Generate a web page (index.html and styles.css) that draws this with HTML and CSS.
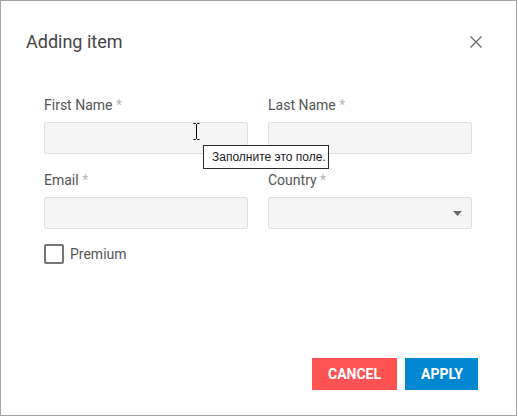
FILE: index.html
```html
<!DOCTYPE html>
<html>
<head>
<meta charset="utf-8">
<link rel="stylesheet" href="styles.css">
</head>
<body>
<div class="dialog">
  <div class="header">
    <div class="title">Adding item</div>
    <button class="close" aria-label="Close">
      <svg width="14" height="14" viewBox="0 0 14 14"><path d="M1.5 1.5 L12.5 12.5 M12.5 1.5 L1.5 12.5" stroke="#6e6e6e" stroke-width="1.4" fill="none"/></svg>
    </button>
  </div>
  <div class="form">
    <div class="field">
      <label class="label">First Name <span class="req">*</span></label>
      <div class="input"></div>
    </div>
    <div class="field">
      <label class="label">Last Name <span class="req">*</span></label>
      <div class="input"></div>
    </div>
    <div class="field">
      <label class="label">Email <span class="req">*</span></label>
      <div class="input"></div>
    </div>
    <div class="field">
      <label class="label">Country <span class="req">*</span></label>
      <div class="input select">
        <svg class="arrow" width="9" height="5" viewBox="0 0 9 5"><path d="M0 0 H9 L4.5 5 Z" fill="#6a6a6a"/></svg>
      </div>
    </div>
  </div>
  <div class="check-row">
    <span class="checkbox"></span>
    <span class="check-label">Premium</span>
  </div>
  <div class="footer">
    <button class="btn cancel">Cancel</button>
    <button class="btn apply">Apply</button>
  </div>
  <div class="tooltip">Заполните это поле.</div>
  <svg class="cursor" width="9" height="17" viewBox="0 0 9 17"><path d="M1.5 0.5 H3.5 L4.5 1.5 L5.5 0.5 H7.5 M4.5 1.5 V15.5 M1.5 16.5 H3.5 L4.5 15.5 L5.5 16.5 H7.5" stroke="#000" stroke-width="1" fill="none"/></svg>
</div>
</body>
</html>
```
FILE: styles.css
```css
* { box-sizing: border-box; }
html, body { margin: 0; padding: 0; background: #fff; }
body { font-family: Roboto, "Noto Sans", sans-serif; }

.dialog {
  position: relative;
  width: 517px;
  height: 416px;
  border: 1px solid #a3a3a3;
  display: flex;
  flex-direction: column;
  background: #fff;
}

.header {
  display: flex;
  align-items: center;
  justify-content: space-between;
  padding: 29px 32px 0 25px;
  height: 53px;
}
.title {
  font-size: 18px;
  line-height: 24px;
  color: #454545;
}
.close {
  border: 0;
  background: none;
  padding: 0;
  width: 14px;
  height: 14px;
  display: flex;
  margin-top: -1px;
  margin-right: 1px;
}

.form {
  display: grid;
  grid-template-columns: 204px 204px;
  column-gap: 20px;
  row-gap: 18px;
  padding: 43px 44px 0 43px;
}
.field { display: flex; flex-direction: column; }
.label {
  font-size: 14px;
  line-height: 17px;
  color: #555;
  margin-bottom: 8px;
}
.req { color: #b8b8b8; }
.input {
  height: 32px;
  background: #f5f5f5;
  border: 1px solid #e0e0e0;
  border-radius: 2px;
}
.select {
  display: flex;
  align-items: center;
  justify-content: flex-end;
  padding-right: 9px;
}

.check-row {
  display: flex;
  align-items: center;
  gap: 6px;
  padding: 15px 0 0 43px;
}
.checkbox {
  width: 20px;
  height: 20px;
  border: 2px solid #757575;
  border-radius: 2px;
}
.check-label {
  font-size: 14px;
  line-height: 20px;
  color: #555;
}

.footer {
  margin-top: auto;
  display: flex;
  justify-content: flex-end;
  gap: 8px;
  padding: 0 38px 25px 0;
}
.btn {
  height: 32px;
  border: 0;
  padding: 0 16px;
  font-family: Roboto, sans-serif;
  font-size: 14px;
  font-weight: 700;
  text-transform: uppercase;
  color: #fff;
  border-radius: 0;
}
.cancel { background: #ff5252; width: 85px; }
.apply { background: #0288d1; width: 73px; }

.tooltip {
  position: absolute;
  left: 202px;
  top: 144px;
  width: 126px;
  height: 24px;
  border: 1px solid #2b2b2b;
  background: #fff;
  font-family: "Liberation Sans", Arial, sans-serif;
  font-size: 12px;
  line-height: 22px;
  color: #1b1b1b;
  padding-left: 8px;
  white-space: nowrap;
}
.cursor {
  position: absolute;
  left: 191px;
  top: 122px;
}
```
